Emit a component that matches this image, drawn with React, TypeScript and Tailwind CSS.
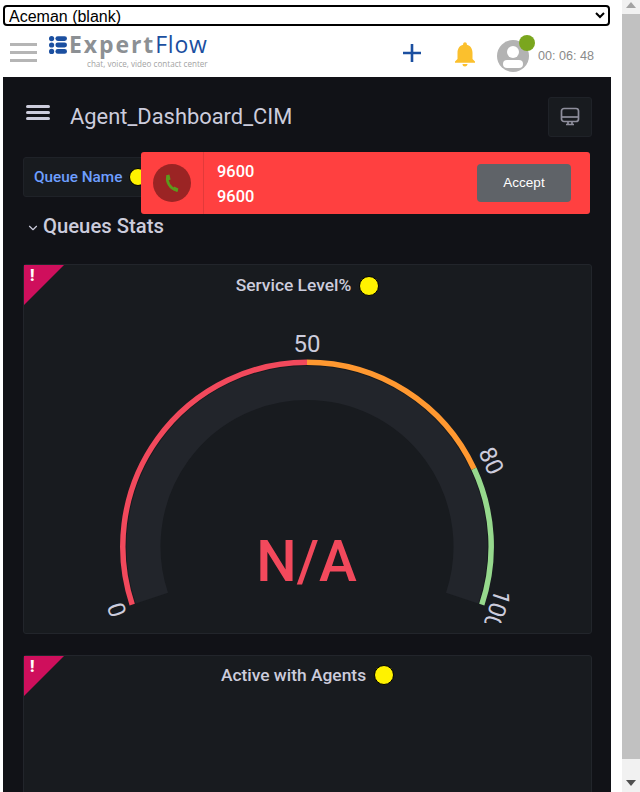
import { ChevronDown } from "lucide-react";
import { MdNotifications } from "react-icons/md";

const CX = 283;
const CY = 246.5;
const START = -108.4;
const SWEEP = 216.8;

function polar(r: number, deg: number) {
  const a = (deg * Math.PI) / 180;
  return { x: CX + r * Math.sin(a), y: CY - r * Math.cos(a) };
}

function valueAngle(v: number) {
  return START + (v / 100) * SWEEP;
}

function arc(r: number, from: number, to: number) {
  const a = polar(r, valueAngle(from));
  const b = polar(r, valueAngle(to));
  const large = ((to - from) / 100) * SWEEP > 180 ? 1 : 0;
  return `M ${a.x} ${a.y} A ${r} ${r} 0 ${large} 1 ${b.x} ${b.y}`;
}

const THRESHOLDS = [
  { from: 0, to: 50, color: "#f2495c" },
  { from: 50, to: 80, color: "#ff9830" },
  { from: 80, to: 100, color: "#96d98d" },
];

const LABELS = [
  { value: 0, r: 200 },
  { value: 50, r: 203 },
  { value: 80, r: 203 },
  { value: 100, r: 200 },
];

function Gauge() {
  return (
    <svg width="567" height="323" className="block">
      <path d={arc(163.5, 0, 100)} fill="none" stroke="#22252b" strokeWidth="34" />
      {THRESHOLDS.map((t) => (
        <path key={t.from} d={arc(184.2, t.from, t.to)} fill="none" stroke={t.color} strokeWidth="5.5" />
      ))}
      {LABELS.map((l) => {
        const deg = valueAngle(l.value);
        const p = polar(l.r, deg);
        return (
          <text
            key={l.value}
            x={p.x}
            y={p.y}
            fill="#ccccdc"
            fontSize="24"
            textAnchor="middle"
            dominantBaseline="central"
            transform={`rotate(${deg} ${p.x} ${p.y})`}
          >
            {l.value}
          </text>
        );
      })}
      <text x={CX - 0.5} y={281} fill="#f2495c" fontSize="57" fontWeight="500" textAnchor="middle">
        N/A
      </text>
    </svg>
  );
}

function Dot({ size = "w-[20px] h-[20px]" }: { size?: string }) {
  return <span className={`block shrink-0 rounded-full border border-black bg-[#fff200] ${size}`} />;
}

function Panel({
  title,
  height,
  titlePad = "pt-[6px]",
  children,
}: {
  title: string;
  height: string;
  titlePad?: string;
  children?: React.ReactNode;
}) {
  return (
    <section className={`relative shrink-0 rounded-[3px] border border-[#22252b] bg-[#181b1f] ${height}`}>
      <div
        className="absolute left-0 top-0 h-[40px] w-[40px] bg-[#cf0f5c]"
        style={{ clipPath: "polygon(0 0, 100% 0, 0 100%)" }}
      />
      <span className="absolute left-[6px] top-[3px] text-[16px] font-black leading-[16px] text-white">!</span>
      <div className={`flex h-[35px] items-center justify-center gap-2 ${titlePad}`}>
        <span className="text-[17.4px] font-medium text-[#ccccdc]">{title}</span>
        <Dot />
      </div>
      {children}
    </section>
  );
}

function TopBar() {
  return (
    <header className="flex h-[51px] items-center bg-white">
      <div className="ml-[7px] flex w-[27px] flex-col gap-[5px] pt-[2px]">
        <span className="block h-[3px] bg-[#b5b5b5]" />
        <span className="block h-[3px] bg-[#b5b5b5]" />
        <span className="block h-[3px] bg-[#b5b5b5]" />
      </div>
      <div className="ml-[12px] flex h-full w-[160px] flex-col pt-[5px] font-['Open_Sans',sans-serif]">
        <div className="flex h-[27px] items-center">
          <svg width="18" height="18" viewBox="0 0 18 18">
            <g fill="#1b4fa0">
              <circle cx="2.6" cy="2.6" r="2.6" />
              <circle cx="2.6" cy="9" r="2.6" />
              <circle cx="2.6" cy="15.4" r="2.6" />
              <rect x="6.4" y="0.2" width="11.6" height="4.8" rx="2.4" />
              <rect x="6.4" y="6.6" width="11.6" height="4.8" rx="2.4" />
              <rect x="6.4" y="13" width="11.6" height="4.8" rx="2.4" />
            </g>
          </svg>
          <span className="ml-[2px] text-[23px] font-bold leading-none tracking-[1.9px] text-[#8c9094]">Expert</span>
          <span className="text-[23px] leading-none tracking-[0.8px] text-[#1b4fa0]">Flow</span>
        </div>
        <span className="ml-[38px] mt-[1px] whitespace-nowrap text-[8.1px] leading-[10px] text-[#a3a3a3]">
          chat, voice, video contact center
        </span>
      </div>
      <svg width="20" height="20" viewBox="0 0 20 20" className="ml-[193px] mt-[3px]">
        <path d="M10 1v18M1 10h18" stroke="#1b4fa0" strokeWidth="2.6" fill="none" />
      </svg>
      <MdNotifications className="ml-[28px] mt-[5px] text-[#fbc02d]" size={30} />
      <div className="relative ml-[17px] mt-[9px] h-[32px] w-[32px] shrink-0 overflow-hidden rounded-full bg-[#b3b3b3]">
        <span className="absolute left-[10px] top-[6px] block h-[12px] w-[12px] rounded-full bg-white" />
        <span className="absolute left-[6px] top-[20px] block h-[8px] w-[20px] rounded-[8px] bg-white" />
      </div>
      <span className="relative ml-[-10px] mt-[-17px] block h-[16px] w-[16px] shrink-0 rounded-full bg-[#7aa61e]" />
      <span className="ml-[3px] mt-[9px] whitespace-nowrap font-['Liberation_Sans',sans-serif] text-[12.6px] text-[#8a8a8a]">
        00: 06: 48
      </span>
    </header>
  );
}

function CallBanner() {
  return (
    <div className="absolute left-[138px] top-[75px] flex h-[62px] w-[449px] items-center rounded-[3px] bg-[#ff4040]">
      <div className="flex h-full w-[63px] items-center justify-center border-r border-[#e23a3a]">
        <span className="flex h-[38px] w-[38px] items-center justify-center rounded-full bg-[#9b2424]">
          <svg width="14" height="19" viewBox="0 0 14 19" fill="none">
            <path d="M2.5 2.5C1.2 8 5 14.5 11.5 16.2" stroke="#5c9a1d" strokeWidth="2.6" strokeLinecap="round" />
            <path d="M1.2 1.2L4.4 0.6L5.6 5.4L3 6.6Z" fill="#5c9a1d" />
            <path d="M9 12.6L13.4 14.6L12.4 18L8 16Z" fill="#5c9a1d" />
          </svg>
        </span>
      </div>
      <div className="ml-[13px] flex flex-1 flex-col gap-[5px] pt-[2px] text-[16.4px] font-medium leading-[20px] text-white">
        <span>9600</span>
        <span>9600</span>
      </div>
      <button className="mr-[19px] h-[38px] w-[94px] rounded-[4px] bg-[#5f6368] font-['Liberation_Sans',sans-serif] text-[13.5px] text-white">
        Accept
      </button>
    </div>
  );
}

function Dashboard() {
  return (
    <main className="relative flex min-h-0 flex-1 flex-col overflow-hidden bg-[#111217] pl-[20px] pr-[19px] font-['Roboto',sans-serif]">
      <div className="flex h-[80px] shrink-0 items-center">
        <div className="ml-[3px] flex w-[24px] flex-col gap-[3px] pb-[10px]">
          <span className="block h-[3px] rounded-full bg-[#ccccdc]" />
          <span className="block h-[3px] rounded-full bg-[#ccccdc]" />
          <span className="block h-[3px] rounded-full bg-[#ccccdc]" />
        </div>
        <h1 className="ml-[20px] mt-[1px] text-[21.9px] font-normal text-[#ccccdc]">Agent_Dashboard_CIM</h1>
        <button className="ml-auto flex h-[40px] w-[44px] items-center justify-center rounded-[3px] border border-[#1f2228] bg-[#181b1f]">
          <svg width="20" height="20" viewBox="0 0 20 20" fill="none" stroke="#8e8e9c" strokeWidth="1.7">
            <rect x="1.5" y="1.5" width="17" height="13" rx="2.5" />
            <path d="M1.5 10h17" />
            <path d="M6 17.5h8M8 15v2.5M12 15v2.5" />
          </svg>
        </button>
      </div>
      <div className="flex h-[40px] w-[200px] shrink-0 items-center gap-[7px] rounded-[3px] border border-[#1f2228] bg-[#181b1f] pl-[10px]">
        <span className="text-[15.3px] font-medium text-[#6e9fff]">Queue Name</span>
        <Dot size="w-[18px] h-[18px]" />
      </div>
      <div className="mt-[17px] flex h-[24px] shrink-0 items-center pl-[3px]">
        <ChevronDown size={14} className="mt-[3px] text-[#ccccdc]" strokeWidth={2} />
        <h2 className="ml-[3px] text-[20.3px] font-medium text-[#ccccdc]">Queues Stats</h2>
      </div>
      <div className="mt-[26px] flex flex-col gap-[21px]">
        <Panel title="Service Level%" height="h-[370px]">
          <Gauge />
        </Panel>
        <Panel title="Active with Agents" height="h-[300px]" titlePad="pt-[3px]" />
      </div>
      <CallBanner />
    </main>
  );
}

function Scrollbar() {
  return (
    <div className="flex h-full w-[18px] flex-col bg-[#f1f1f1]">
      <div className="flex h-[14px] items-start justify-center pt-[2px]">
        <svg width="10" height="6" viewBox="0 0 10 6">
          <path d="M5 0l5 6H0z" fill="#a3a3a3" />
        </svg>
      </div>
      <div className="h-[745px] bg-[#c1c1c1]" />
      <div className="flex flex-1 items-end justify-center pb-[6px]">
        <svg width="10" height="6" viewBox="0 0 10 6">
          <path d="M5 6L0 0h10z" fill="#505050" />
        </svg>
      </div>
    </div>
  );
}

export default function App() {
  return (
    <div className="flex h-[792px] w-[640px] overflow-hidden bg-white">
      <div className="ml-[3px] flex h-full w-[608px] flex-col">
        <select className="mt-[5px] h-[21px] w-[607px] shrink-0 rounded-[4px] border-2 border-black bg-white font-['Liberation_Sans',sans-serif] text-[16px] leading-none text-black">
          <option>Aceman (blank)</option>
        </select>
        <TopBar />
        <Dashboard />
      </div>
      <div className="ml-[11px]">
        <Scrollbar />
      </div>
    </div>
  );
}
